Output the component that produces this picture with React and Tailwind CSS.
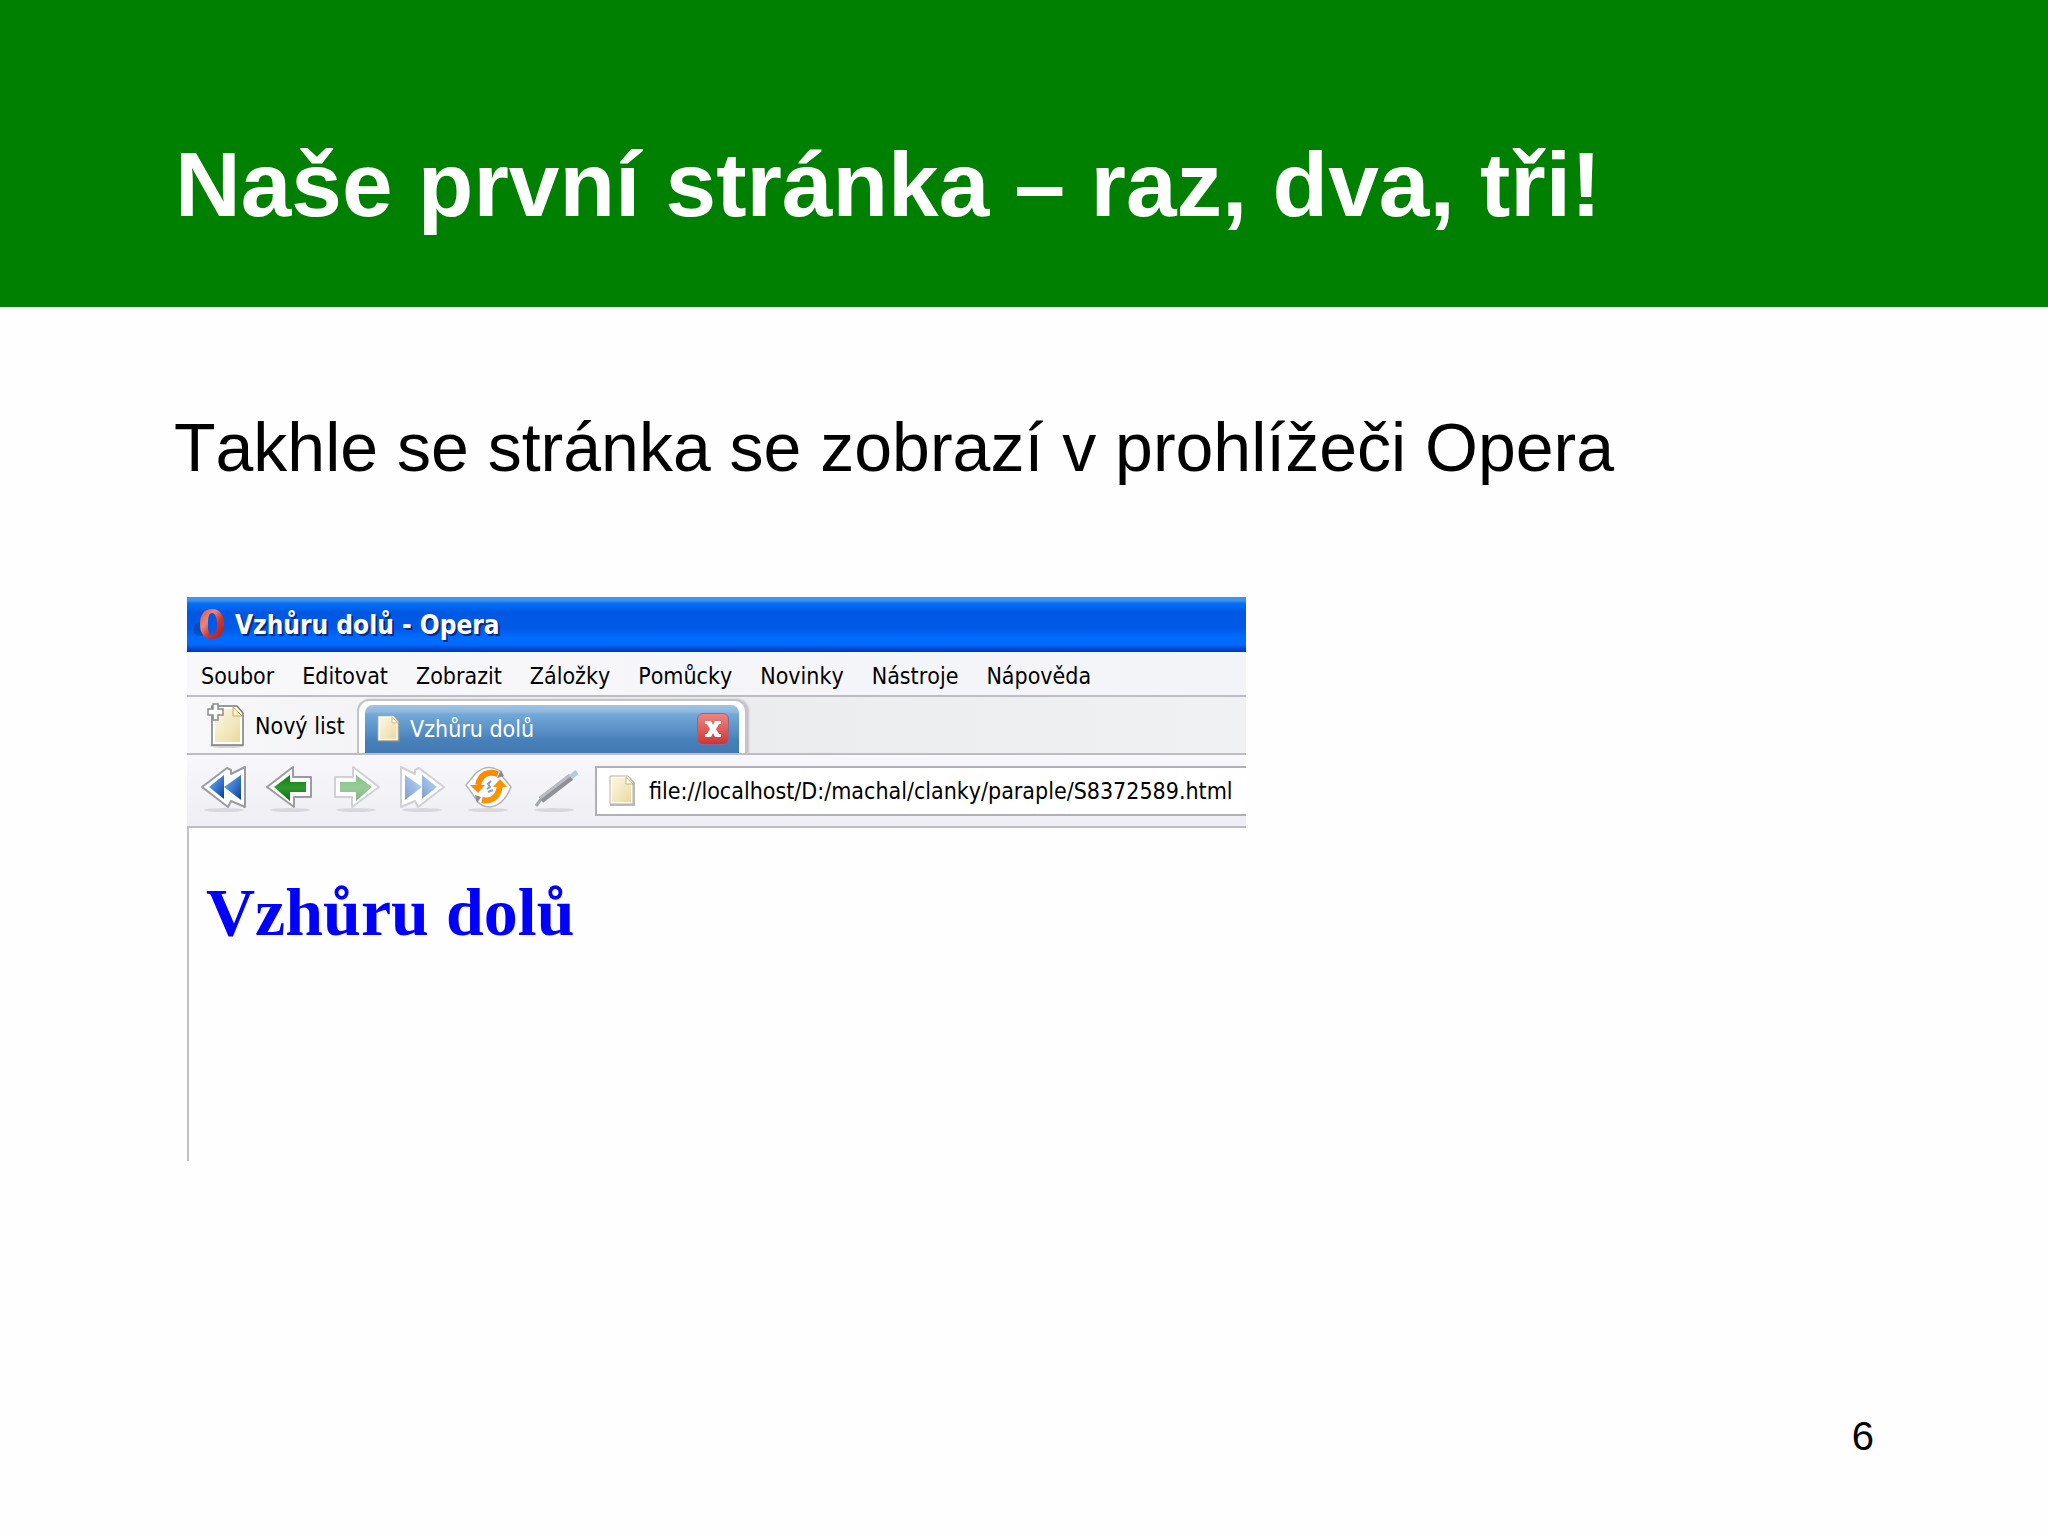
const menuItems = ['Soubor', 'Editovat', 'Zobrazit', 'Záložky', 'Pomůcky', 'Novinky', 'Nástroje', 'Nápověda'];

function OperaLogo() {
  return (
    <svg viewBox="0 0 34 32" className="h-8 w-[34px]" aria-hidden="true">
      <defs>
        <linearGradient id="operaRed" x1="0" y1="0" x2="1" y2="1">
          <stop offset="0" stopColor="#d8504a" />
          <stop offset="0.35" stopColor="#e98880" />
          <stop offset="0.6" stopColor="#d0342c" />
          <stop offset="1" stopColor="#a81c1c" />
        </linearGradient>
      </defs>
      <ellipse cx="8" cy="20" rx="8" ry="7" fill="#0b3f9c" opacity="0.55" />
      <path
        fillRule="evenodd"
        fill="url(#operaRed)"
        d="M19 0c8 0 12 6 12 15s-4 15-12 15S7 24 7 15 11 0 19 0zm0 4c-3 0-4 4-4 11s1 11 4 11 5-4 5-11-2-11-5-11z"
      />
    </svg>
  );
}

function PageIcon({ className }) {
  return (
    <svg viewBox="0 0 26 32" className={className} aria-hidden="true">
      <defs>
        <linearGradient id="paper" x1="0" y1="0" x2="1" y2="1">
          <stop offset="0" stopColor="#fdf7e2" />
          <stop offset="0.6" stopColor="#f2e6bd" />
          <stop offset="1" stopColor="#e9d99f" />
        </linearGradient>
      </defs>
      <path d="M1 2h20l5 6v23H1z" fill="#8f8f8a" opacity="0.6" />
      <path d="M1 1h18l5 6v22H1z" fill="#fffdf6" stroke="#b5b1a0" />
      <path d="M3 3h15l4 5v19H3z" fill="url(#paper)" />
      <path d="M17 2v7h7z" fill="#fffbea" stroke="#c8b77c" />
    </svg>
  );
}

function NewPageIcon() {
  return (
    <svg viewBox="0 0 38 46" className="h-[46px] w-[38px]" aria-hidden="true">
      <ellipse cx="20" cy="43" rx="17" ry="2" fill="#000" opacity="0.15" />
      <path d="M5 3h25l6 7v32H5z" fill="#fffef8" stroke="#7b7b7b" strokeWidth="1.5" />
      <path d="M8 6h20l5 6v27H8z" fill="url(#paper)" />
      <path d="M26 4v9h9z" fill="#fff3c4" stroke="#c5ad6c" />
      <path d="M6 1h5v5h5v6h-5v5H6v-5H1V6h5z" fill="#fff" stroke="#8a8a8a" strokeWidth="1.5" />
    </svg>
  );
}

function IconShadow() {
  return <ellipse cx="24" cy="45" rx="20" ry="2" fill="#000" opacity="0.1" />;
}

function RewindIcon({ faded }) {
  return (
    <svg viewBox="0 0 48 48" className={faded ? 'size-12 -scale-x-100' : 'size-12'} aria-hidden="true">
      <defs>
        <linearGradient id="blueFill" x1="0" y1="0" x2="1" y2="1">
          <stop offset="0" stopColor="#7db4ec" />
          <stop offset="0.5" stopColor="#3b7cd0" />
          <stop offset="1" stopColor="#0b3c96" />
        </linearGradient>
      </defs>
      <IconShadow />
      <path
        d="M2 22 L27 3 L31 5 V9 L45 2 V42 L31 36 L28 42 Z"
        fill="#fff"
        stroke={faded ? '#d0d0d5' : '#9c9ca0'}
        strokeWidth="2"
        strokeLinejoin="round"
      />
      <g fill="url(#blueFill)" opacity={faded ? 0.5 : 1}>
        <path d="M9 22 L24 10 V34 Z" />
        <path d="M24 22 L41 10 V35 Z" />
      </g>
    </svg>
  );
}

function ArrowIcon({ faded }) {
  return (
    <svg viewBox="0 0 48 48" className={faded ? 'size-12 -scale-x-100' : 'size-12'} aria-hidden="true">
      <defs>
        <linearGradient id="greenFill" x1="0" y1="0" x2="0" y2="1">
          <stop offset="0" stopColor="#0f7d12" />
          <stop offset="0.5" stopColor="#2f9a2c" />
          <stop offset="1" stopColor="#0a6a0c" />
        </linearGradient>
      </defs>
      <IconShadow />
      <path
        d="M1 22 L27 2 V12 H45 V32 H28 V42 Z"
        fill="#fff"
        stroke={faded ? '#d0d0d5' : '#9c9ca0'}
        strokeWidth="2"
        strokeLinejoin="round"
      />
      <path d="M8 22 L24 10 V17 H40 V27 H24 V36 Z" fill="url(#greenFill)" opacity={faded ? 0.5 : 1} />
    </svg>
  );
}

function ReloadIcon() {
  return (
    <svg viewBox="0 0 48 48" className="size-12" aria-hidden="true">
      <IconShadow />
      <path
        d="M12 8 Q24 -2 36 6 L38 11 L47 22 Q40 40 26 42 Q16 42 12 34 L2 20 Z"
        fill="#fff"
        stroke="#b4b4b8"
        strokeWidth="1.5"
        strokeLinejoin="round"
      />
      <path d="M33 13 L37 5 L40 11 Z M17 32 L13 38 L11 30 Z" fill="#8a8a90" />
      <path d="M27 16l-3 3 2 3-3 2M29 25l-5 2" fill="none" stroke="#8d99bb" strokeWidth="2" />
      <path d="M34 9 Q18 4 14 20" fill="none" stroke="#fb8c00" strokeWidth="6" />
      <path d="M6 20 H21 L14 28 Z" fill="#fb8c00" />
      <path d="M18 35 Q33 38 36 21" fill="none" stroke="#fb9200" strokeWidth="6" />
      <path d="M29 22 L36 14 L43 22 Z" fill="#fb9200" />
    </svg>
  );
}

function PenIcon() {
  return (
    <svg viewBox="0 0 48 48" className="size-12" aria-hidden="true">
      <IconShadow />
      <path d="M6 41 L12 33" stroke="#a4a8ac" strokeWidth="3" />
      <path d="M11 35 L41 12" stroke="#8d9298" strokeWidth="7" />
      <path d="M10 33 L40 10" stroke="#b9bdc2" strokeWidth="3" />
      <path d="M41 12 L47 7" stroke="#b3cbe2" strokeWidth="5" />
    </svg>
  );
}

const toolbar = [
  { label: 'Na začátek', icon: <RewindIcon /> },
  { label: 'Zpět', icon: <ArrowIcon /> },
  { label: 'Vpřed', icon: <ArrowIcon faded /> },
  { label: 'Rychle vpřed', icon: <RewindIcon faded /> },
  { label: 'Obnovit', icon: <ReloadIcon /> },
  { label: 'Upravit', icon: <PenIcon /> },
];

function BrowserWindow() {
  return (
    <section className="w-full max-w-[1059px] overflow-hidden font-['DejaVu_Sans_Condensed','DejaVu_Sans',sans-serif] text-[23px] leading-7 text-black">
      <div className="flex h-[55px] items-center gap-2 bg-[linear-gradient(to_bottom,#3f93f0_0%,#3f93f0_6%,#0070f8_12%,#0058e2_28%,#005ae8_58%,#006cff_74%,#006cff_86%,#0048d8_94%,#0038b8_100%)] pl-1.5">
        <OperaLogo />
        <span className="text-[26px] font-bold text-white [text-shadow:2px_2px_0_#0a2a80]">Vzhůru dolů - Opera</span>
      </div>

      <nav className="flex h-[45px] items-center gap-7 border-b-2 border-[#bcbcc2] bg-linear-to-r from-[#f8f8fb] to-[#f3f4f7] pt-1 pl-3.5">
        {menuItems.map((item) => (
          <button key={item} type="button">
            {item}
          </button>
        ))}
      </nav>

      <div className="flex h-[58px] items-end border-b-2 border-[#bcbcc2] bg-linear-to-r from-[#f8f8fb] via-[#ebecee] to-[#f0f1f3]">
        <button type="button" className="flex w-[170px] items-center gap-2.5 pb-1 pl-5">
          <NewPageIcon />
          Nový list
        </button>
        <div className="w-[390px] rounded-t-xl border-x-2 border-t-2 border-[#c4c4c8] bg-white px-1.5 pt-1 shadow-[2px_0_2px_#c4c4c8]">
          <div className="flex h-12 items-center rounded-t-lg bg-[linear-gradient(to_bottom,#a3c4e2_0%,#8db8de_14%,#70a8d8_20%,#5b92c8_50%,#4680b8_75%,#4479b4_100%)] pr-2.5 pl-3">
            <PageIcon className="h-7 w-[23px]" />
            <button type="button" className="grow pl-2.5 text-left text-white">
              Vzhůru dolů
            </button>
            <button
              type="button"
              aria-label="Zavřít"
              className="flex size-8 items-center justify-center rounded-md border border-[#8a6a94] bg-linear-to-b from-[#ee8480] to-[#cc3434]"
            >
              <svg viewBox="0 0 20 20" className="size-5" aria-hidden="true">
                <path d="M2 2h6l2 4 2-4h6v3h-2l-3 5 3 5h2v3h-6l-2-4-2 4H2v-3h2l3-5-3-5H2z" fill="#fff" />
              </svg>
            </button>
          </div>
        </div>
      </div>

      <div className="flex h-[73px] items-center border-b-2 border-[#bcbcc2] bg-linear-to-b from-[#f8f8fc] to-[#efeff3] pl-[13px]">
        <div className="flex shrink-0 gap-[18px] pb-1">
          {toolbar.map((tool) => (
            <button key={tool.label} type="button" aria-label={tool.label}>
              {tool.icon}
            </button>
          ))}
        </div>
        <label className="ml-[17px] flex h-[50px] grow items-center gap-3.5 border-y-2 border-l-2 border-[#b0b0b6] bg-white pl-3">
          <PageIcon className="h-8 w-[26px]" />
          <input
            type="text"
            aria-label="Adresa"
            defaultValue="file://localhost/D:/machal/clanky/paraple/S8372589.html"
            className="min-w-0 grow bg-transparent outline-none"
          />
        </label>
      </div>

      <div className="min-h-[333px] border-l-2 border-[#c4c0c8] pt-12 pl-[17px]">
        <h2 className="font-['Liberation_Serif',serif] text-[68px] leading-[72px] font-bold text-[#0000ff]">Vzhůru dolů</h2>
      </div>
    </section>
  );
}

export default function App() {
  return (
    <div className="flex min-h-screen flex-col bg-[#fefefe] font-['Liberation_Sans',sans-serif] text-black [font-kerning:none]">
      <header className="bg-[#008000] px-[175px] pt-[133px] pb-[70px]">
        <h1 className="text-[91px] leading-[104px] font-bold text-white">Naše první stránka – raz, dva, tři!</h1>
      </header>
      <main className="px-[174px] pt-[100px]">
        <p className="text-[68px] leading-[80px]">Takhle se stránka se zobrazí v prohlížeči Opera</p>
        <div className="pt-[110px] pl-[13px]">
          <BrowserWindow />
        </div>
      </main>
      <footer className="mt-auto px-[174px] pb-[77px] text-right text-[40px] leading-[46px]">6</footer>
    </div>
  );
}
